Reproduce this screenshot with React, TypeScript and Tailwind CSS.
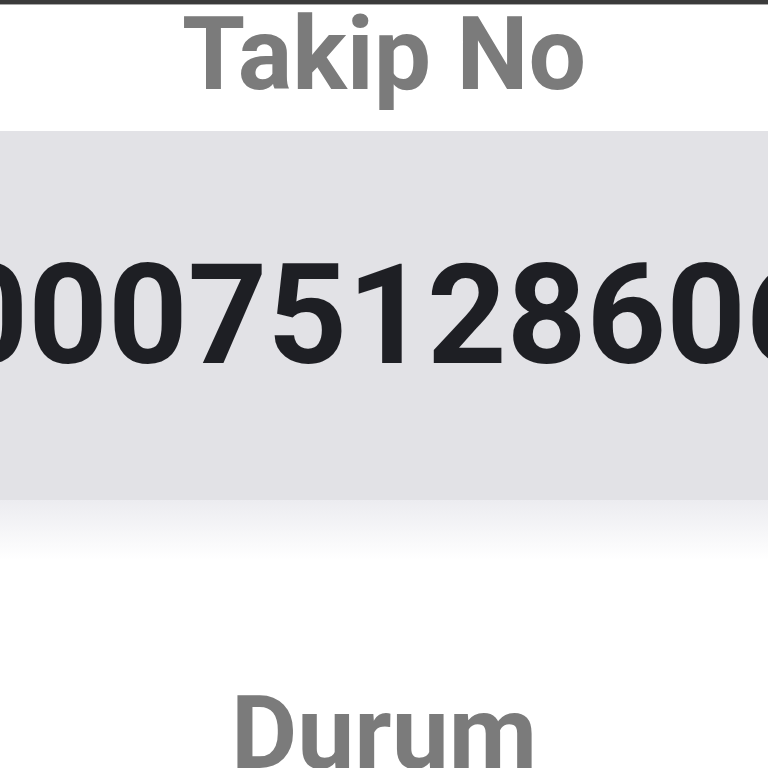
const TRACKING_NO = '0000751286060'

export default function App() {
  return (
    <div className="w-[768px] h-[768px] overflow-hidden bg-white font-['Roboto',sans-serif]">
      {/* status strip */}
      <div className="h-[4px] bg-[#3b3b3b]" />
      <div className="h-[1px] bg-[#a8a8a8]" />

      {/* label */}
      <div className="h-[126px] flex justify-center">
        <h2 className="mt-[-2px] text-[102px] leading-none font-bold text-[#7b7b7b] whitespace-nowrap">
          Takip No
        </h2>
      </div>

      {/* tracking number */}
      <div className="h-[369px] bg-[#e2e2e6] flex items-center justify-center overflow-hidden">
        <span className="ml-[6px] text-[139px] leading-none font-bold text-[#1e1f24] whitespace-nowrap">
          {TRACKING_NO}
        </span>
      </div>
      <div className="h-[60px] bg-gradient-to-b from-[#ececf0] to-white" />

      <div className="h-[122px]" />
      <div className="flex justify-center">
        <h2 className="text-[102px] leading-none font-bold text-[#7b7b7b] whitespace-nowrap">Durum</h2>
      </div>
    </div>
  )
}
